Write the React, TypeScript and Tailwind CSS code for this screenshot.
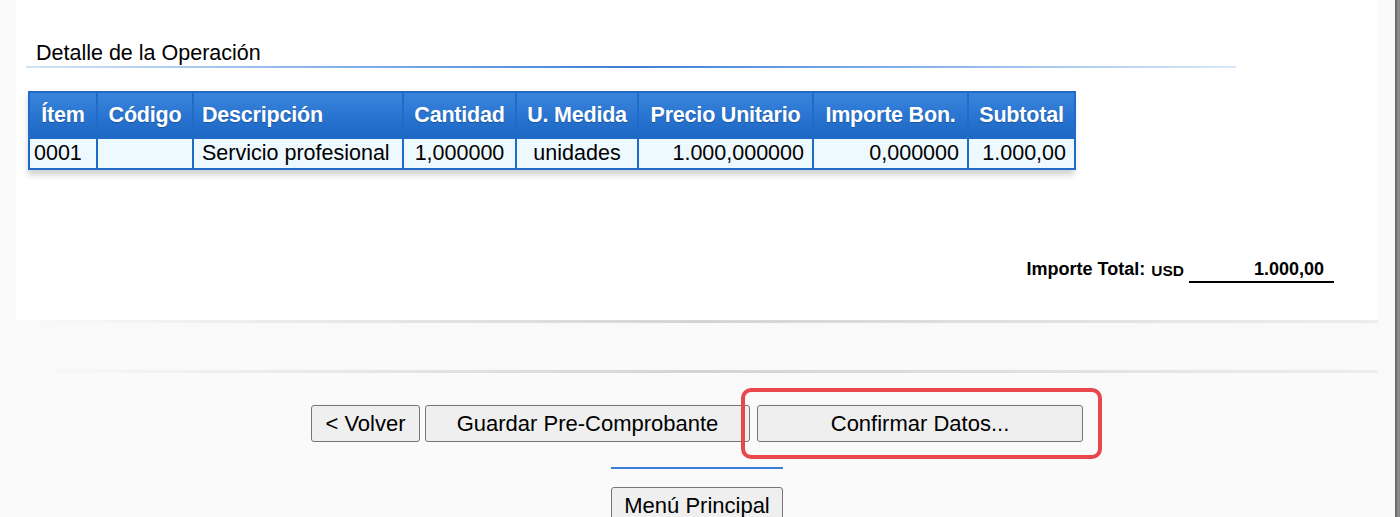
import React from 'react'

interface Column {
  label: string
  width: string
  headAlign: string
  cellAlign: string
}

const columns: Column[] = [
  { label: 'Ítem', width: 'w-[68px]', headAlign: 'text-center', cellAlign: 'text-left pl-[4px]' },
  { label: 'Código', width: 'w-[96px]', headAlign: 'text-center', cellAlign: 'text-left' },
  { label: 'Descripción', width: 'w-[210px]', headAlign: 'text-left pl-[8px]', cellAlign: 'text-left pl-[8px]' },
  { label: 'Cantidad', width: 'w-[113px]', headAlign: 'text-center', cellAlign: 'text-center' },
  { label: 'U. Medida', width: 'w-[122px]', headAlign: 'text-center', cellAlign: 'text-center' },
  { label: 'Precio Unitario', width: 'w-[175px]', headAlign: 'text-center', cellAlign: 'text-right pr-[8px]' },
  { label: 'Importe Bon.', width: 'w-[155px]', headAlign: 'text-center', cellAlign: 'text-right pr-[8px]' },
  { label: 'Subtotal', width: 'w-[107px]', headAlign: 'text-center', cellAlign: 'text-right pr-[8px]' },
]

const rows = [['0001', '', 'Servicio profesional', '1,000000', 'unidades', '1.000,000000', '0,000000', '1.000,00']]

// botón estilo nativo del navegador
function NativeButton({ label, width }: { label: string; width: string }) {
  return (
    <button
      className={`${width} h-[37px] bg-[#efefef] border border-[#767676] rounded-[3px] text-[22px] text-black leading-none`}
    >
      {label}
    </button>
  )
}

function ShadowLine() {
  return (
    <div className="h-[3px] bg-gradient-to-r from-[#fafafa] via-[#d4d4d4] to-[#ededed]" />
  )
}

export default function App() {
  return (
    <div className="flex w-[1400px] h-[517px] overflow-hidden bg-[#fafafa] font-['Liberation_Sans',Arial,sans-serif] text-black">
      <div className="w-[1395px] pl-[16px] pr-[17px]">
        {/* Panel principal */}
        <div className="bg-white h-[320px] pt-[41px]">
          <div className="ml-[10px] w-[1210px]">
            <div className="pl-[10px] text-[21.5px] leading-[24px]">Detalle de la Operación</div>
            <div className="mt-[1px] h-[2px] bg-gradient-to-r from-[#d3e4f7] via-[#3a80d8] to-[#d9e8f8]" />
          </div>

          <div className="ml-[12px] mt-[23px] w-[1046px] shadow-[0_5px_6px_rgba(0,0,0,0.18)]">
            <table className="table-fixed border-collapse w-[1046px]">
              <thead>
                <tr className="bg-gradient-to-b from-[#3a86dc] via-[#2a75d1] to-[#1c67c5]">
                  {columns.map((col) => (
                    <th
                      key={col.label}
                      className={`${col.width} ${col.headAlign} h-[46px] border-2 border-[#1f6cc8] text-white font-bold text-[21.5px] tracking-[-0.2px] whitespace-nowrap px-[2px] [text-shadow:0_1px_1px_rgba(0,0,0,0.25)]`}
                    >
                      {col.label}
                    </th>
                  ))}
                </tr>
              </thead>
              <tbody>
                {rows.map((row, i) => (
                  <tr key={i} className="bg-[#eef8ff]">
                    {row.map((cell, j) => (
                      <td
                        key={j}
                        className={`${columns[j].cellAlign} h-[31px] border-2 border-[#1f6cc8] text-[21.5px] leading-none whitespace-nowrap`}
                      >
                        {cell}
                      </td>
                    ))}
                  </tr>
                ))}
              </tbody>
            </table>
          </div>

          <div className="mt-[90px] flex justify-end items-end pr-[44px]">
            <span className="font-bold text-[18px] leading-none mb-[5px]">Importe Total:</span>
            <span className="font-bold text-[15.5px] leading-none ml-[6px] mb-[5px]">USD</span>
            <div className="ml-[5px] w-[145px] border-b-2 border-black text-right font-bold text-[18px] pr-[10px] pb-[3px] leading-none">
              1.000,00
            </div>
          </div>
        </div>
        <ShadowLine />

        {/* Franja intermedia */}
        <div className="h-[47px] bg-[#f9f9f9]" />
        <ShadowLine />

        {/* Botones */}
        <div className="mt-[32px] flex justify-center">
          <NativeButton label="< Volver" width="w-[109px]" />
          <div className="ml-[5px]">
            <NativeButton label="Guardar Pre-Comprobante" width="w-[325px]" />
          </div>
          <div className="relative ml-[7px]">
            <NativeButton label="Confirmar Datos..." width="w-[326px]" />
            <div className="absolute left-[-16px] right-[-19px] top-[-17px] bottom-[-17px] border-[4px] border-[#e8484b] rounded-[10px] pointer-events-none" />
          </div>
        </div>

        <div className="mt-[25px] flex justify-center">
          <div className="w-[172px] h-[2px] bg-[#3a80d8]" />
        </div>

        <div className="mt-[18px] flex justify-center">
          <NativeButton label="Menú Principal" width="w-[172px]" />
        </div>
      </div>
      <div className="w-[5px] bg-[#8c8c8c] border-l-2 border-[#6e6e6e]" />
    </div>
  )
}
